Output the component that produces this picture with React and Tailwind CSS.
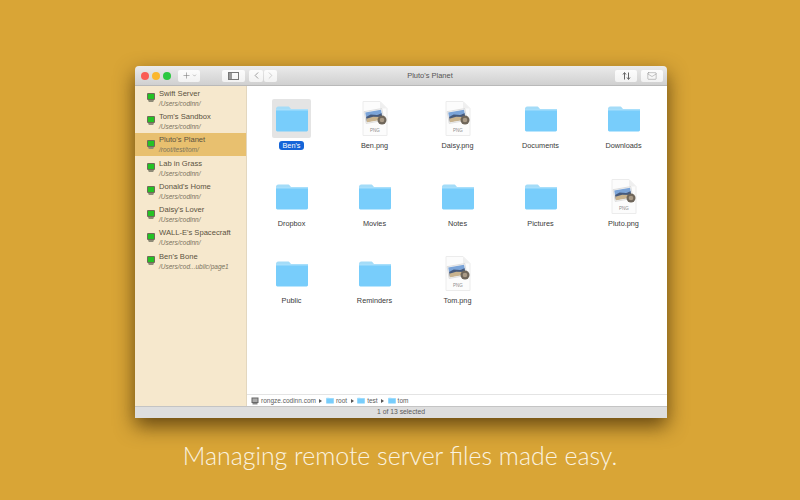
import { ChevronLeft, ChevronRight, ChevronDown, Plus, Mail } from "lucide-react";

const servers = [
  { name: "Swift Server", path: "/Users/codinn/" },
  { name: "Tom's Sandbox", path: "/Users/codinn/" },
  { name: "Pluto's Planet", path: "/root/test/tom/", active: true },
  { name: "Lab in Grass", path: "/Users/codinn/" },
  { name: "Donald's Home", path: "/Users/codinn/" },
  { name: "Daisy's Lover", path: "/Users/codinn/" },
  { name: "WALL-E's Spacecraft", path: "/Users/codinn/" },
  { name: "Ben's Bone", path: "/Users/cod...ublic/page1" },
];

const files = [
  { name: "Ben's", selected: true },
  { name: "Ben.png", png: true },
  { name: "Daisy.png", png: true },
  { name: "Documents" },
  { name: "Downloads" },
  { name: "Dropbox" },
  { name: "Movies" },
  { name: "Notes" },
  { name: "Pictures" },
  { name: "Pluto.png", png: true },
  { name: "Public" },
  { name: "Reminders" },
  { name: "Tom.png", png: true },
];

function ServerIcon() {
  return (
    <svg width="8" height="9" viewBox="0 0 8 9" className="shrink-0 ml-[1px]">
      <rect x="0" y="0" width="8" height="7" rx="1" fill="#6f6b58" />
      <rect x="1" y="1" width="6" height="5" fill="#24c224" />
      <path d="M1 7h6l-.8 2H1.800z" fill="#8f8b78" />
    </svg>
  );
}

function FolderIcon({ w = 34, h = 27 }) {
  return (
    <svg width={w} height={h} viewBox="0 0 34 27">
      <path d="M1 4C1 2.500 2 1.500 3.200 1.500h9.600c1 0 1.600.4 2.200 1.200l1 1.300H1z" fill="#a4dcf8" />
      <path d="M1 5c0-.6.5-1 1-1H32c.6 0 1 .4 1 1V25c0 .8-.6 1.400-1.400 1.400H2.400C1.600 26.400 1 25.800 1 25z" fill="#78cdfb" />
      <rect x="1" y="4" width="32" height="1.500" fill="#a8dffb" />
    </svg>
  );
}

function PngIcon() {
  return (
    <svg width="26" height="35" viewBox="0 0 26 35">
      <path d="M1 0.500H18L25 7.500V34.500H1z" fill="#fcfcfc" stroke="#ececec" />
      <path d="M18 0.500V7.500H25z" fill="#efefef" />
      <g transform="rotate(-10 12 15)">
        <rect x="3" y="9" width="18" height="12" fill="#f4f4f4" stroke="#c8c8c8" strokeWidth="0.500" />
        <rect x="4" y="10" width="16" height="4.500" fill="#7ba4d8" />
        <path d="M4 14.500l5-1.500 6 1.500 5-1v6H4z" fill="#465a7c" />
        <path d="M4 16.500l7-1 9 2v2.500H4z" fill="#c9b38e" />
      </g>
      <circle cx="20" cy="19" r="4.500" fill="#6f665a" />
      <circle cx="20" cy="19" r="2.300" fill="#a99a86" />
      <text x="13" y="30.500" textAnchor="middle" fontSize="4.500" fontFamily="Liberation Sans" fill="#8c8c8c">PNG</text>
    </svg>
  );
}

function ToolButton({ className = "", children }) {
  return (
    <div className={`h-[12px] flex items-center justify-center rounded-[2px] bg-gradient-to-b from-[#fcfcfc] to-[#f2f2f2] text-[#777] ${className}`}>
      {children}
    </div>
  );
}

function Crumb({ label }) {
  return (
    <>
      <svg width="3" height="4" viewBox="0 0 3 4" className="mx-[3.500px]">
        <path d="M0 0l3 2-3 2z" fill="#555" />
      </svg>
      <FolderIcon w={8} h={7} />
      <span className="ml-[2px]">{label}</span>
    </>
  );
}

function FileCell({ file }) {
  return (
    <div className="flex flex-col items-center">
      <div className={`w-[39px] h-[39px] flex items-center justify-center rounded-[2px] ${file.selected ? "bg-[#e4e4e4]" : ""}`}>
        {file.png ? <PngIcon /> : <FolderIcon />}
      </div>
      <div className={`mt-[3px] h-[9px] px-[3px] flex items-center rounded-[3px] text-[7.300px] leading-none ${file.selected ? "bg-[#1565d8] text-white" : "text-[#3a3a3a]"}`}>
        {file.name}
      </div>
    </div>
  );
}

export default function App() {
  return (
    <div className="w-[800px] h-[500px] overflow-hidden bg-[#d9a536] flex flex-col items-center font-['Liberation_Sans',sans-serif]">
      {/* Window */}
      <div className="mt-[66px] ml-[2px] w-[532px] h-[352px] shrink-0 flex flex-col overflow-hidden rounded-t-[4px] shadow-[0_8px_20px_rgba(50,30,0,0.7)]">
        {/* Title bar */}
        <div className="h-[20px] shrink-0 flex items-center bg-gradient-to-b from-[#ebebeb] to-[#d0d0d0] border-b border-[#b9b9b9] px-[6px] pr-[4px]">
          <div className="flex items-center gap-[3px]">
            <span className="w-[8px] h-[8px] rounded-full bg-[#fa5b55]" />
            <span className="w-[8px] h-[8px] rounded-full bg-[#fbb72e]" />
            <span className="w-[8px] h-[8px] rounded-full bg-[#2bc840]" />
          </div>
          <ToolButton className="ml-[7px] w-[22px] gap-[1px]">
            <Plus size={9} strokeWidth={1.500} />
            <ChevronDown size={5} strokeWidth={2} />
          </ToolButton>
          <ToolButton className="ml-[22px] w-[23px]">
            <svg width="11" height="8" viewBox="0 0 11 8">
              <rect x="0.500" y="0.500" width="10" height="7" fill="none" stroke="#777" />
              <rect x="1" y="1" width="3" height="6" fill="#999" />
            </svg>
          </ToolButton>
          <ToolButton className="ml-[4px] w-[14px]">
            <ChevronLeft size={11} strokeWidth={1.500} />
          </ToolButton>
          <ToolButton className="ml-[1px] w-[13px] text-[#bbb]">
            <ChevronRight size={11} strokeWidth={1.500} />
          </ToolButton>
          <div className="flex-1 text-center text-[7.500px] text-[#555] pr-[32px]">Pluto's Planet</div>
          <ToolButton className="w-[22px]">
            <svg width="9" height="8" viewBox="0 0 9 8" fill="none" stroke="#666" strokeWidth="1">
              <path d="M2.500 7.500V1M1 2.500l1.500-2 1.500 2M6.500 0.500V7M5 5.500l1.500 2 1.500-2" />
            </svg>
          </ToolButton>
          <ToolButton className="ml-[4px] w-[22px]">
            <Mail size={10} strokeWidth={1} />
          </ToolButton>
        </div>

        <div className="flex-1 flex min-h-0">
          {/* Sidebar */}
          <div className="w-[112px] shrink-0 bg-[#f6e8cd] border-r border-[#e3d7bf]">
            {servers.map((s) => (
              <div key={s.name} className={`h-[23.300px] flex items-center pl-[11px] ${s.active ? "bg-[#e8c06f]" : ""}`}>
                <ServerIcon />
                <div className="ml-[4px] flex flex-col gap-[2px]">
                  <div className="text-[7.600px] leading-[9px] text-[#5a5240] whitespace-nowrap">{s.name}</div>
                  <div className="text-[6.500px] leading-[7px] italic text-[#7a725e] whitespace-nowrap">{s.path}</div>
                </div>
              </div>
            ))}
          </div>

          {/* Files */}
          <div className="flex-1 flex flex-col min-w-0 bg-white">
            <div className="flex-1 grid grid-cols-[repeat(5,83px)] auto-rows-[77.500px] content-start pl-[3px] pt-[13.400px] justify-start">
              {files.map((f) => (
                <FileCell key={f.name} file={f} />
              ))}
            </div>

            {/* Path bar */}
            <div className="h-[12px] shrink-0 flex items-center pl-[4px] bg-white border-t border-[#e4e4e4] text-[6.500px] text-[#5c5c5c]">
              <svg width="8" height="8" viewBox="0 0 8 8" className="mr-[2px]">
                <rect x="0.500" y="0.500" width="7" height="5.500" fill="#666" />
                <rect x="1.500" y="1.500" width="5" height="3.500" fill="#aaa" />
                <rect x="1.500" y="6" width="5" height="1.500" fill="#888" />
              </svg>
              <span>rongze.codinn.com</span>
              <Crumb label="root" />
              <Crumb label="test" />
              <Crumb label="tom" />
            </div>
          </div>
        </div>

        {/* Status bar */}
        <div className="h-[12px] shrink-0 flex items-center justify-center bg-[#dedede] border-t border-[#c4c4c4] text-[6.800px] text-[#5c5c5c]">
          1 of 13 selected
        </div>
      </div>

      <div className="mt-[19px] text-[24.900px] leading-[36px] font-light text-[#fbf3e0] font-['Lato',sans-serif] whitespace-nowrap">
        Managing remote server files made easy.
      </div>
    </div>
  );
}
